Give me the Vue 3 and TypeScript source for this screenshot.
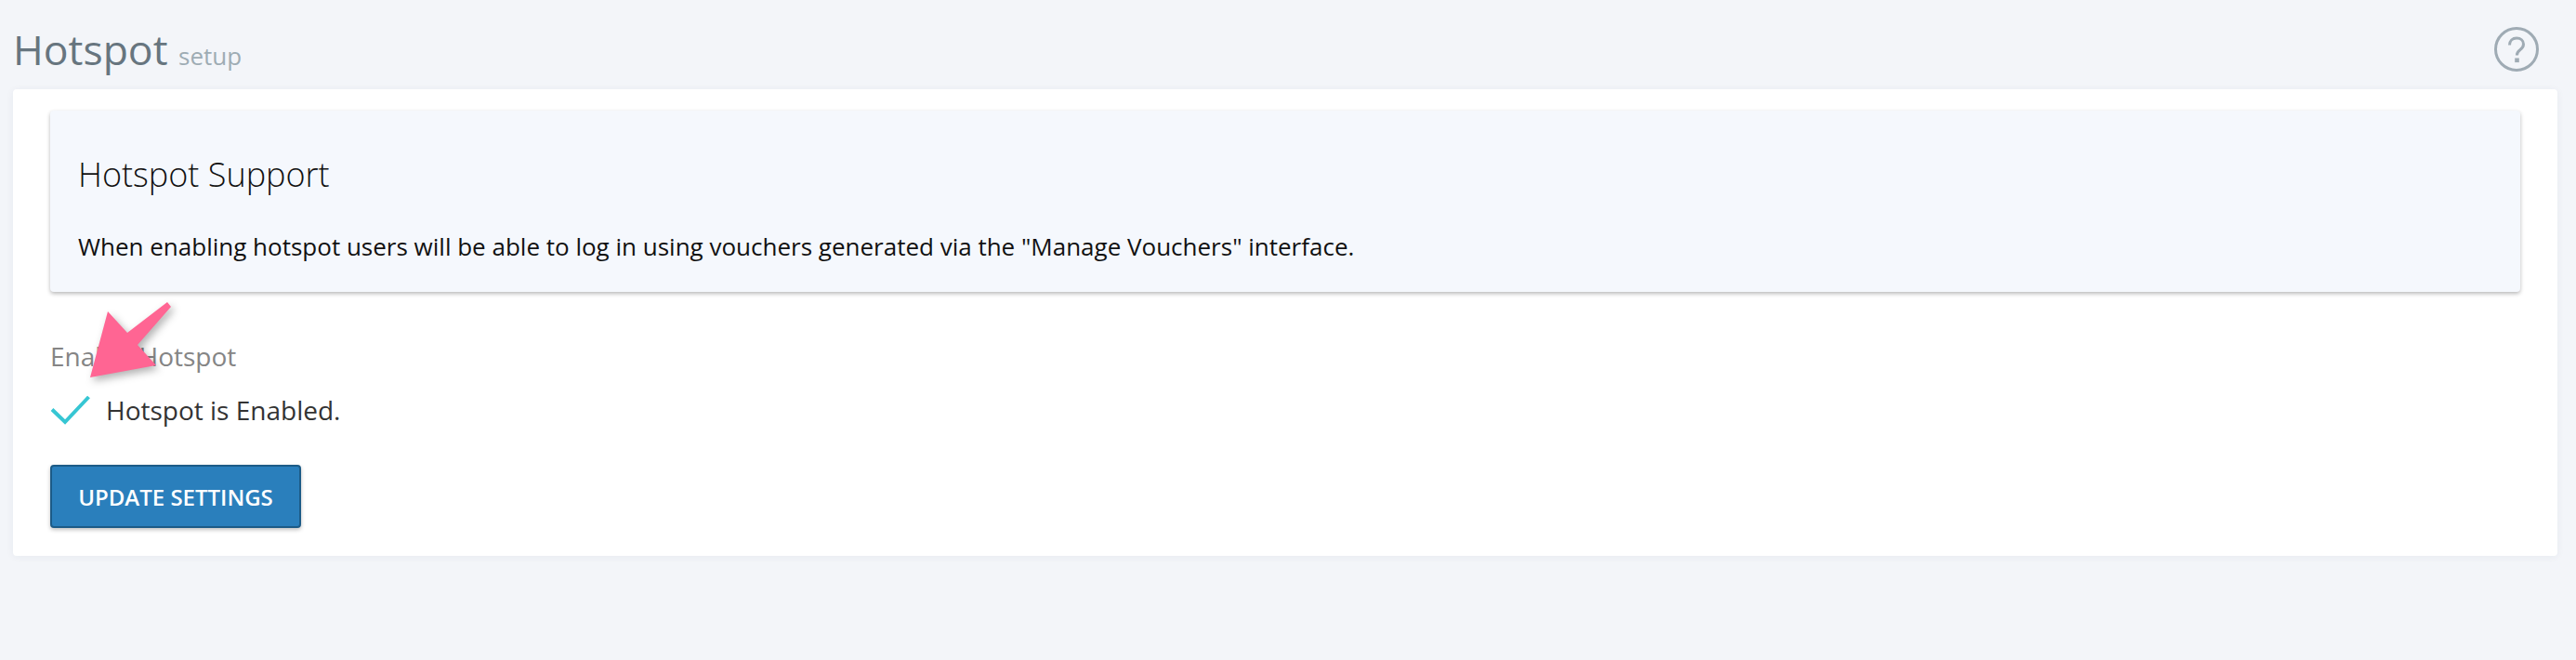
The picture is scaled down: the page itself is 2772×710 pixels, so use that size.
<template>
  <div class="page">
    <header class="page-header">
      <h1 class="title">Hotspot <small>setup</small></h1>
      <svg class="help" width="48" height="48" viewBox="0 0 48 48" fill="none">
        <circle cx="24" cy="24" r="22.5" stroke="#9fabb4" stroke-width="3" />
        <path d="M16.5 19.5c0-4.6 3.2-7.5 7.6-7.5 4.300 0 7.400 2.700 7.400 6.500 0 3-1.600 4.600-3.800 6.200-2.300 1.700-3.300 2.800-3.300 5.800" stroke="#9fabb4" stroke-width="3" />
        <rect x="22.200" y="33.500" width="4.600" height="4.600" fill="#9fabb4" />
      </svg>
    </header>

    <section class="card">
      <div class="info-box">
        <h2>Hotspot Support</h2>
        <p>When enabling hotspot users will be able to log in using vouchers generated via the "Manage Vouchers" interface.</p>
      </div>

      <div class="field">
        <label>Enable Hotspot</label>
        <div class="status">
          <svg class="check" width="44" height="34" viewBox="0 0 44 34" fill="none">
            <path d="M2 16.500 16 30 41.500 3" stroke="#36c6d3" stroke-width="4" />
          </svg>
          <span>Hotspot is Enabled.</span>
        </div>
      </div>

      <button class="btn" type="button">UPDATE SETTINGS</button>

      <svg class="arrow" width="100" height="90" viewBox="0 0 100 90">
        <polygon points="2,84 21,13 42,36 85,3 89,8 53,49 73,71" fill="#ff6593" />
      </svg>
    </section>
  </div>
</template>

<script setup lang="ts">
</script>

<style>
html,
body {
  margin: 0;
  background: #f3f5f9;
}
</style>

<style scoped>
.page {
  height: 710px;
  padding: 0 20px 0 14px;
  box-sizing: border-box;
  font-family: "Open Sans", "Liberation Sans", sans-serif;
}

.page-header {
  display: flex;
  justify-content: space-between;
  align-items: flex-start;
  height: 96px;
}

.title {
  margin: 25px 0 0;
  font-size: 44.5px;
  line-height: 56px;
  font-weight: 400;
  color: #67757f;
}

.title small {
  font-size: 26px;
  color: #9eacb4;
}

.help {
  margin: 29px 20px 0 0;
}

.card {
  position: relative;
  height: 502px;
  box-sizing: border-box;
  padding: 23px 40px 0;
  background: #fff;
  border-radius: 4px;
  box-shadow: 0 1px 8px rgba(40, 50, 90, 0.06);
}

.info-box {
  box-sizing: border-box;
  height: 195px;
  padding: 47px 30px 0;
  background: #f5f8fd;
  border-radius: 4px;
  box-shadow: 0 2px 4px rgba(0, 0, 0, 0.28);
  color: #111;
}

.info-box h2 {
  margin: 0;
  font-size: 36px;
  line-height: 44px;
  font-weight: 300;
}

.info-box p {
  margin: 38px 0 0;
  font-size: 26px;
  line-height: 34px;
}

.field {
  margin-top: 50px;
}

.field label {
  display: block;
  font-size: 28px;
  line-height: 38px;
  color: #858585;
}

.status {
  display: flex;
  align-items: center;
  gap: 16px;
  margin-top: 17px;
  font-size: 28px;
  line-height: 44px;
  color: #333;
}

.btn {
  display: block;
  width: 270px;
  height: 68px;
  margin-top: 37px;
  padding: 0;
  background: #2a7fbc;
  border: 2px solid #1c5b87;
  border-radius: 4px;
  box-shadow: 0 2px 4px rgba(0, 0, 0, 0.25);
  color: #fff;
  font-family: inherit;
  font-size: 24px;
  font-weight: 600;
}

.arrow {
  position: absolute;
  left: 81px;
  top: 226px;
  filter: drop-shadow(3px 4px 4px rgba(0, 0, 0, 0.3));
}
</style>
